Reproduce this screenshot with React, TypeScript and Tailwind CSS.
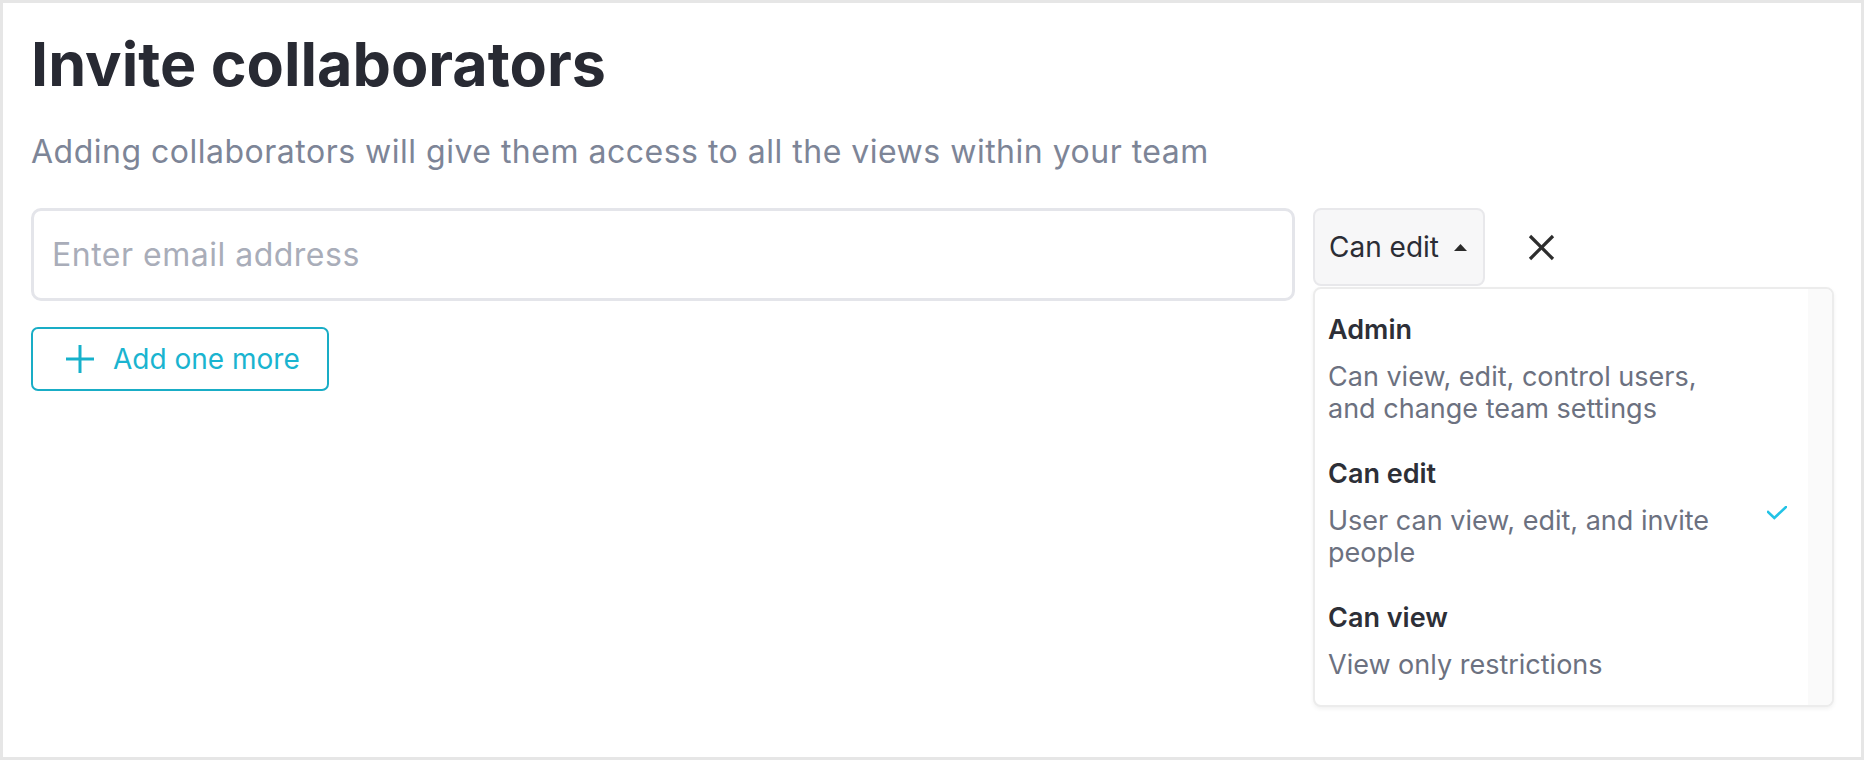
import React from "react";

const font = { fontFamily: "Inter, 'Noto Sans', sans-serif" };

function MenuItem({ title, desc, checked }: { title: string; desc: string; checked?: boolean }) {
  return (
    <div className="flex items-center pl-[13px] pr-[21px] py-[16px]">
      <div className="w-[410px] flex flex-col gap-[14px]">
        <div className="text-[27px] leading-[34px] font-semibold text-[#2d2f37]">{title}</div>
        <div className="text-[27px] leading-[32px] text-[#6c7180]">{desc}</div>
      </div>
      <div className="flex-1" />
      <div className="w-[20px] h-[14px]">
        {checked && (
          <svg width="20" height="14" viewBox="0 0 20 14" fill="none">
            <polyline points="1,6 7.3,12 19,1" stroke="#22c3e6" strokeWidth="2.6" strokeLinecap="square" strokeLinejoin="miter" />
          </svg>
        )}
      </div>
    </div>
  );
}

export default function App() {
  return (
    <div style={font} className="w-[1864px] h-[760px] border-[3px] border-[#e6e6e6] bg-white pl-[28px] pt-[24px] overflow-hidden">
      <h1 className="text-[61px] leading-[74px] font-bold text-[#282a33]">Invite collaborators</h1>
      <p className="mt-[31px] text-[32px] tracking-[0.5px] leading-[40px] text-[#7d8597]">
        Adding collaborators will give them access to all the views within your team
      </p>
      <div className="mt-[36px] flex items-start">
        <div className="w-[1264px] h-[93px] border-[3px] border-[#e4e5ea] rounded-[10px] flex items-center pl-[18px]">
          <span className="text-[32px] tracking-[0.5px] leading-[40px] text-[#a9adb9]">Enter email address</span>
        </div>
        <div className="ml-[18px] flex items-center">
          <div className="relative">
            <div className="h-[78px] w-[172px] bg-[#f7f7f8] border-2 border-[#e8e8eb] rounded-[8px] flex items-center pl-[14px]">
              <span className="text-[28px] leading-[40px] text-[#2b2d35]">Can edit</span>
              <svg className="ml-[15px]" width="13" height="7" viewBox="0 0 13 7">
                <polygon points="6.5,0 13,7 0,7" fill="#2b2b2b" />
              </svg>
            </div>
            <div className="absolute left-0 top-full mt-[1px] w-[521px] border-2 border-[#ececec] rounded-[8px] bg-white shadow-[0_2px_4px_rgba(0,0,0,0.06)] flex overflow-hidden">
              <div className="flex-1 py-[8px]">
                <MenuItem title="Admin" desc="Can view, edit, control users, and change team settings" />
                <MenuItem title="Can edit" desc="User can view, edit, and invite people" checked />
                <MenuItem title="Can view" desc="View only restrictions" />
              </div>
              <div className="w-[24px] bg-[#fafafa]" />
            </div>
          </div>
          <svg className="ml-[43px]" width="27" height="27" viewBox="0 0 27 27">
            <line x1="2" y1="2" x2="25" y2="25" stroke="#2d2d2d" strokeWidth="3.2" />
            <line x1="25" y1="2" x2="2" y2="25" stroke="#2d2d2d" strokeWidth="3.2" />
          </svg>
        </div>
      </div>
      <div className="mt-[26px] w-[298px] h-[64px] border-2 border-[#19adc6] rounded-[7px] flex items-center pl-[33px]">
        <svg width="28" height="28" viewBox="0 0 28 28">
          <line x1="14" y1="0" x2="14" y2="28" stroke="#16b1cb" strokeWidth="3" />
          <line x1="0" y1="14" x2="28" y2="14" stroke="#16b1cb" strokeWidth="3" />
        </svg>
        <span className="ml-[19px] text-[28px] leading-[40px] text-[#1ab4d0]">Add one more</span>
      </div>
    </div>
  );
}
